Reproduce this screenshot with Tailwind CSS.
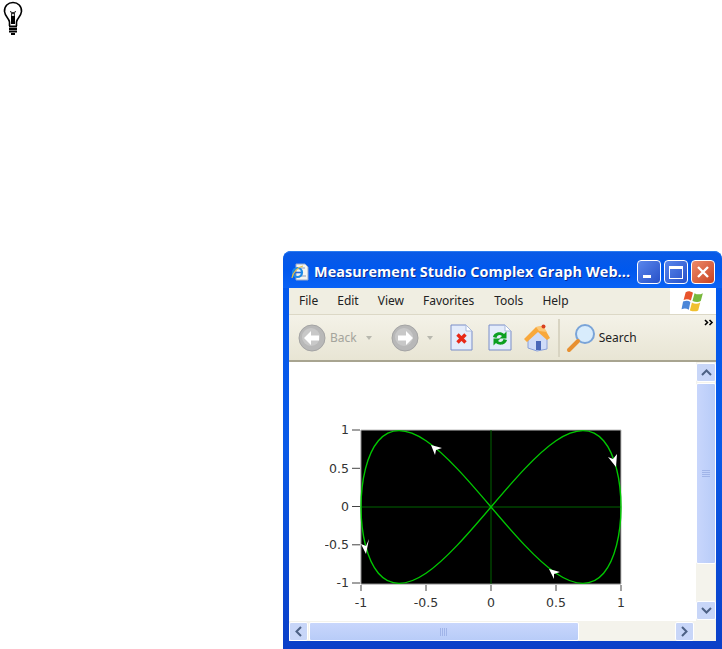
<!doctype html>
<html>
<head>
<meta charset="utf-8">
<script src="https://cdn.jsdelivr.net/npm/@tailwindcss/browser@4"></script>
</head>
<body class="bg-white w-[722px] h-[649px] overflow-hidden font-['Noto_Sans',sans-serif]">
<div class="h-[251px] pl-[3px] pt-[1px]">
  <svg width="20" height="36" viewBox="0 0 20 36" fill="none" stroke="#000">
    <path d="M6.5 25 V21 C6 17 2 15.500 1.500 10.500 C1.200 5 5 1.500 10 1.500 C15 1.500 18.800 5 18.500 10.500 C18 15.500 14 17 13.500 21 V25" stroke-width="1.600"/>
    <path d="M7.500 10 L9 13 L10 11 L11 13 L12.500 10 M8.700 13 V22 M11.300 13 V22" stroke-width="1"/>
    <path d="M8 15 H12 V23 H8Z" fill="#000" stroke="none"/>
    <path d="M6 25.500 H14 M6 28 H14 M6 30.500 H14" stroke-width="1.800"/>
    <path d="M8 33 H12" stroke-width="2"/>
  </svg>
</div>
<div class="ml-[283px] w-[439px] h-[398px] flex flex-col rounded-t-[8px] px-[6px] pb-[8px] bg-gradient-to-b from-[#0058ee] via-[#0a5ae8] to-[#0a3fc8]">
  <div class="h-[37px] flex items-center shrink-0 -mx-[6px] px-[6px] rounded-t-[8px] bg-gradient-to-b from-[#0a5ae6] via-[#0058ee] to-[#0a62f5] border-t border-[#2a7cf0]">
    <svg width="20" height="20" viewBox="0 0 20 20" class="shrink-0 ml-[1px] mt-[3px]">
      <path d="M6 2 H15 L18 5 V18 H6Z" fill="#f4f4f0" stroke="#9aa8c8"/>
      <path d="M9 6 H15 M10 14 H16" stroke="#8a9ab8"/>
      <circle cx="7.500" cy="10.500" r="4.500" fill="none" stroke="#1c8ae8" stroke-width="2.200"/>
      <path d="M3.500 10.500 H11" stroke="#1c6ae0" stroke-width="1.600"/>
      <path d="M2 16 C3 10 8 5 13 4" fill="none" stroke="#e8c040" stroke-width="1.200"/>
    </svg>
    <span class="ml-[4px] mt-[5px] text-white font-bold text-[14.4px] leading-none tracking-[0.1px] whitespace-nowrap [text-shadow:1px_1px_0_#0a2a90] font-['Open_Sans',sans-serif]">Measurement Studio Complex Graph Web...</span>
    <div class="ml-auto mt-[4px] flex items-center gap-[3px] mr-[1px]">
      <div class="w-[24px] h-[24px] rounded-[4px] border border-white bg-gradient-to-br from-[#5a86ec] to-[#2850c8] flex items-end pl-[5px] pb-[5px]"><div class="w-[8px] h-[3px] bg-white"></div></div>
      <div class="w-[24px] h-[24px] rounded-[4px] border border-white bg-gradient-to-br from-[#5a86ec] to-[#2850c8] flex items-center justify-center"><div class="w-[14px] h-[13px] border border-white border-t-[3px]"></div></div>
      <div class="w-[24px] h-[24px] rounded-[4px] border border-white bg-gradient-to-br from-[#ec8a6a] to-[#c8401c] flex items-center justify-center">
        <svg width="14" height="14" viewBox="0 0 14 14"><path d="M2 2 L12 12 M12 2 L2 12" stroke="#fff" stroke-width="2.400"/></svg>
      </div>
    </div>
  </div>
  <div class="flex-1 flex flex-col min-h-0 bg-[#ece9d8]">
    <div class="h-[27px] shrink-0 flex items-stretch border-b border-[#dcd8c6]">
      <div class="flex-1 flex items-center pl-[10px] gap-[19px] text-[12px] text-[#222] bg-[#f0eee2]">
        <span>File</span><span>Edit</span><span>View</span><span>Favorites</span><span class="ml-[1px]">Tools</span><span>Help</span>
      </div>
      <div class="w-[46px] bg-white flex items-center justify-center">
        <svg width="25" height="24" viewBox="0 0 24 23">
          <path d="M4.500 3 C7 1.500 9 2 11.500 3.500 L9.500 11 C7 9.500 5 9.500 2.500 10.500Z" fill="#e8542c"/>
          <path d="M13 4 C15.500 5.500 18 5.500 21 4 L19 11.500 C16.500 13 14 12.500 11 11.500Z" fill="#78b83c"/>
          <path d="M2 12 C5 11 7 11 9 12.500 L7.500 20 C5 18.500 3 18.500 0.500 19.500Z" fill="#4a86d8"/>
          <path d="M10.500 13 C13 14.500 16 14.500 18.500 13 L16.500 20.500 C14 22 11.500 21.500 8.500 20.500Z" fill="#f0c030"/>
        </svg>
      </div>
    </div>
    <div class="h-[47px] shrink-0 flex items-center relative bg-gradient-to-b from-[#f4f2e8] to-[#e8e5d4] border-b-2 border-[#a8a490]">
      <svg width="28" height="28" viewBox="0 0 28 28" class="ml-[9px]"><circle cx="14" cy="14" r="13" fill="#b8b8b8" stroke="#a4a4a4"/><circle cx="13" cy="13" r="9" fill="#c8c8c8"/><path d="M6 14 L13 7 V11.500 H21 V16.500 H13 V21Z" fill="#fff"/></svg>
      <span class="ml-[4px] text-[12px] text-[#a4a49c]">Back</span>
      <div class="ml-[9px] w-0 h-0 border-x-[3.5px] border-x-transparent border-t-[4px] border-t-[#b8b8ae]"></div>
      <svg width="28" height="28" viewBox="0 0 28 28" class="ml-[19px]"><circle cx="14" cy="14" r="13" fill="#b8b8b8" stroke="#a4a4a4"/><circle cx="13" cy="13" r="9" fill="#c8c8c8"/><path d="M22 14 L15 7 V11.500 H7 V16.500 H15 V21Z" fill="#fff"/></svg>
      <div class="ml-[8px] w-0 h-0 border-x-[3.5px] border-x-transparent border-t-[4px] border-t-[#b8b8ae]"></div>
      <svg width="23" height="27" viewBox="0 0 23 27" class="ml-[17px]"><path d="M1 1 H16 L22 7 V26 H1Z" fill="#e4ecfb" stroke="#7a8ec8"/><path d="M16 1 V7 H22Z" fill="#fff" stroke="#a8b8dc"/><path d="M7.500 10.500 L15.500 18.500 M15.500 10.500 L7.500 18.500" stroke="#e82818" stroke-width="3.400"/></svg>
      <svg width="24" height="27" viewBox="0 0 24 27" class="ml-[15px]"><path d="M1 1 H17 L23 7 V26 H1Z" fill="#e4ecfb" stroke="#7a8ec8"/><path d="M17 1 V7 H23Z" fill="#fff" stroke="#a8b8dc"/><path d="M5 13 C6 8 13 7 16 10 L18.500 7.500 V14.500 H11.500 L14 12 C12 10 9 11 8.500 14Z M19 16 C18 21 11 22 8 19 L5.500 21.500 V14.500 H12.500 L10 17 C12 19 15 18 15.500 15Z" fill="#0ca020"/></svg>
      <svg width="28" height="28" viewBox="0 0 28 28" class="ml-[11px]">
        <path d="M5 13 L14 5 L24 13 V25 L14 27 L5 24Z" fill="#cfdcf8" stroke="#8aa0d8"/>
        <path d="M13 17 H18 V26 H13Z" fill="#4a68b8"/>
        <path d="M1 15 L13 3 L20 2 L27 14 L24 16 L15 8 L4 18Z" fill="#f8a83c"/>
        <path d="M13 3 L20 2 L24 8 L16 7Z" fill="#fcc878"/>
        <circle cx="20.500" cy="2.500" r="2" fill="#d84020"/>
      </svg>
      <div class="ml-[7px] w-[2px] h-[38px] bg-[#d8d4c2]"></div>
      <svg width="30" height="30" viewBox="0 0 30 30" class="ml-[6px]">
        <circle cx="19" cy="11" r="9" fill="#d8ecfc" stroke="#7aa4d8" stroke-width="2"/>
        <path d="M12 18 L3 27" stroke="#e89030" stroke-width="4" stroke-linecap="round"/>
      </svg>
      <span class="ml-[3px] text-[12px] text-[#222]">Search</span>
      <svg width="10" height="7" viewBox="0 0 10 7" class="absolute right-[2px] top-[4px]"><path d="M1 1 L3.500 3.500 L1 6 M5.500 1 L8 3.500 L5.500 6" fill="none" stroke="#000" stroke-width="1.600"/></svg>
    </div>
    <div class="flex-1 flex flex-col min-h-0 bg-white">
      <div class="flex-1 flex min-h-0">
        <div class="flex-1 min-w-0 pt-[55px] pl-[36px]">
          <svg width="340" height="200" viewBox="0 0 340 200" class="block">
            <g font-family="DejaVu Sans" font-size="12.500" fill="#333" text-anchor="end">
              <text x="24" y="17">1</text>
              <text x="24" y="94">0</text>
              <text x="24" y="56">0.5</text>
              <text x="24" y="132">-0.5</text>
              <text x="24" y="170">-1</text>
            </g>
            <g font-family="DejaVu Sans" font-size="12.500" fill="#333" text-anchor="middle">
              <text x="36" y="190">-1</text>
              <text x="101" y="190">-0.5</text>
              <text x="166" y="190">0</text>
              <text x="231" y="190">0.5</text>
              <text x="296" y="190">1</text>
            </g>
            <path d="M27 13 H35 M27 51.300 H35 M27 89.500 H35 M27 127.800 H35 M27 166 H35 M36 168 V174 M101 168 V174 M166 168 V174 M231 168 V174 M296 168 V174" stroke="#444" stroke-width="1"/>
            <g transform="translate(36 13)">
              <rect x="0" y="0" width="260" height="154" fill="#000"/>
              <path d="M0 0 V154 H260" fill="none" stroke="#8a8a8a" stroke-width="1"/>
              <path d="M0 0 H260 V154" fill="none" stroke="#bdbdbd" stroke-width="1"/>
              <path d="M130 0 V154 M0 77 H260" stroke="#006400" stroke-width="1"/>
              <path d="M260 77 C260 50.300 253.950 24.100 242.600 10.750 C231.250 -2.600 214.650 -2.600 195 10.750 C175.350 24.100 152.690 50.300 130 77 C107.310 103.700 84.650 129.900 65 143.250 C45.350 156.600 28.750 156.600 17.400 143.250 C6.050 129.900 0 103.700 0 77 C0 50.300 6.050 24.100 17.400 10.750 C28.750 -2.600 45.350 -2.600 65 10.750 C84.650 24.100 107.310 50.300 130 77 C152.690 103.700 175.350 129.900 195 143.250 C214.650 156.600 231.250 156.600 242.600 143.250 C253.950 129.900 260 103.700 260 77Z" fill="none" stroke="#00c800" stroke-width="1.400"/>
              <path d="M70 15 L81 18 L75 20 L74 25 Z" fill="#fff"/>
              <path d="M247 27 L252 29 L256 24 L255 37 Z" fill="#fff"/>
              <path d="M0 114 L5 116 L8 109 L5 124 Z" fill="#fff"/>
              <path d="M188 139 L199 142 L193 144 L193 149 Z" fill="#fff"/>
            </g>
          </svg>
        </div>
        <div class="w-[20px] shrink-0 flex flex-col bg-[#f4f3ec] py-[1px]">
          <div class="h-[19px] shrink-0 rounded-[2px] bg-[#c8d6f8] border border-white flex items-center justify-center">
            <svg width="11" height="7" viewBox="0 0 11 7"><path d="M1 6 L5.500 1.500 L10 6" fill="none" stroke="#4d6185" stroke-width="2"/></svg>
          </div>
          <div class="h-[181px] mt-[1px] shrink-0 rounded-[2px] bg-gradient-to-r from-[#c8d6fc] to-[#b8ccf8] border border-white flex items-center justify-center">
            <svg width="8" height="8" viewBox="0 0 8 8"><path d="M0 .500 H8 M0 2.500 H8 M0 4.500 H8 M0 6.500 H8" stroke="#a0b4e8"/></svg>
          </div>
          <div class="flex-1"></div>
          <div class="h-[19px] shrink-0 rounded-[2px] bg-[#c8d6f8] border border-white flex items-center justify-center">
            <svg width="11" height="7" viewBox="0 0 11 7"><path d="M1 1 L5.500 5.500 L10 1" fill="none" stroke="#4d6185" stroke-width="2"/></svg>
          </div>
        </div>
      </div>
      <div class="h-[20px] shrink-0 flex bg-[#f4f3ec] pt-[1px]">
        <div class="w-[19px] shrink-0 rounded-[2px] bg-[#c8d6f8] border border-white flex items-center justify-center">
          <svg width="7" height="11" viewBox="0 0 7 11"><path d="M6 1 L1.500 5.500 L6 10" fill="none" stroke="#4d6185" stroke-width="2"/></svg>
        </div>
        <div class="w-[270px] ml-[1px] shrink-0 rounded-[2px] bg-gradient-to-b from-[#c8d6fc] to-[#b8ccf8] border border-white flex items-center justify-center">
          <svg width="8" height="8" viewBox="0 0 8 8"><path d="M.500 0 V8 M2.500 0 V8 M4.500 0 V8 M6.500 0 V8" stroke="#a0b4e8"/></svg>
        </div>
        <div class="flex-1"></div>
        <div class="w-[19px] shrink-0 rounded-[2px] bg-[#c8d6f8] border border-white flex items-center justify-center">
          <svg width="7" height="11" viewBox="0 0 7 11"><path d="M1 1 L5.500 5.500 L1 10" fill="none" stroke="#4d6185" stroke-width="2"/></svg>
        </div>
        <div class="w-[22px] shrink-0"></div>
      </div>
    </div>
  </div>
</div>
</body>
</html>
